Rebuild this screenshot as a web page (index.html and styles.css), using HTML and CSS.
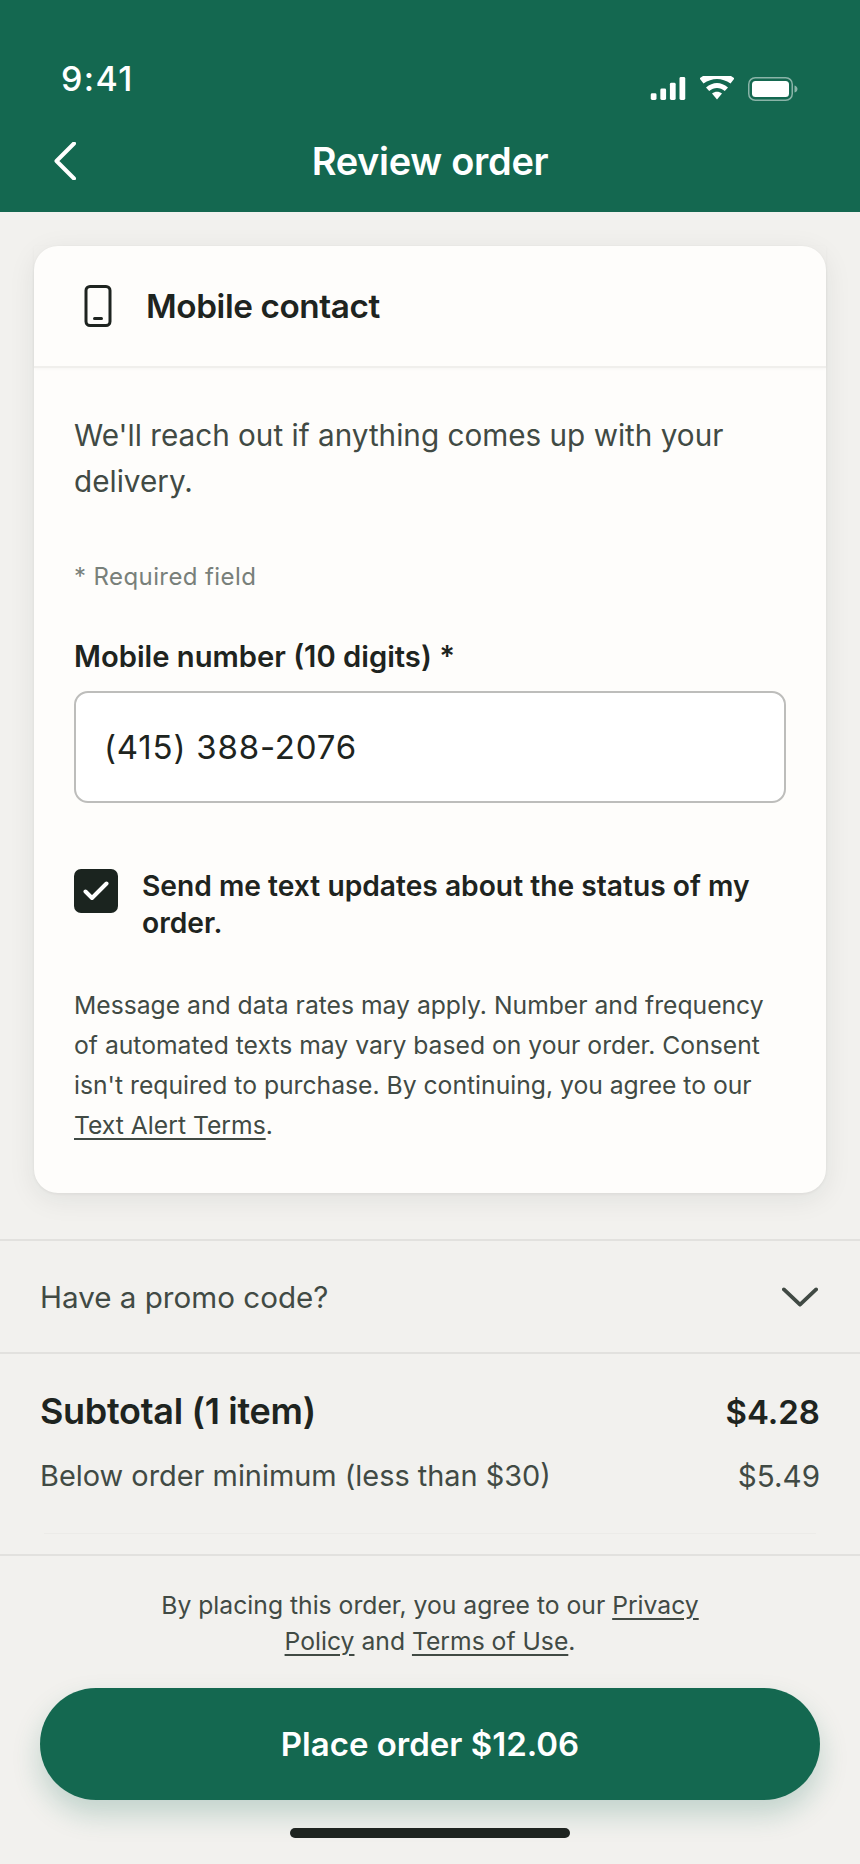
FILE: index.html
```html
<!DOCTYPE html>
<html lang="en">
<head>
<meta charset="utf-8">
<title>Review order</title>
<link rel="stylesheet" href="styles.css">
</head>
<body>
<div class="screen">
  <header class="header">
    <div class="status">
      <span class="time">9:41</span>
      <div class="status-icons">
        <svg class="signal" width="36" height="23" viewBox="0 0 36 24"><rect x="0" y="17" width="6" height="7" rx="1.5"/><rect x="10" y="12" width="6" height="12" rx="1.5"/><rect x="20" y="6" width="6" height="18" rx="1.5"/><rect x="30" y="0" width="6" height="24" rx="1.5"/></svg>
        <svg class="wifi" width="34" height="24" viewBox="0 0 34 24"><path d="M0 2 L3 0 H31 L34 2 V3 L30.500 7.500 C22 1.500 12 1.500 3.500 7.500 L0 3 Z"/><path d="M6 11.500 C13 5.500 21 5.500 28 11.500 L24.800 15 C20 11 14 11 9.200 15 Z"/><path d="M12 17.500 C15 15 19 15 22 17.500 L17 23.500 Z"/></svg>
        <svg class="battery" width="50" height="24" viewBox="0 0 50 24"><rect x="0.750" y="0.750" width="43.500" height="22.500" rx="6.500" class="batt-rim"/><rect x="4" y="4" width="37" height="16" rx="3.500" class="batt-fill"/><path d="M46.500 8.500 C48.500 9 49.500 10.500 49.500 12 C49.500 13.500 48.500 15 46.500 15.500 Z" class="batt-cap"/></svg>
      </div>
    </div>
    <div class="nav">
      <svg class="back" width="22" height="38" viewBox="0 0 22 38"><path d="M20 1.500 L2.500 19 L20 36.500"/></svg>
      <h1 class="title">Review order</h1>
    </div>
  </header>

  <main class="content">
    <section class="card">
      <div class="card-head">
        <svg class="phone" width="28" height="42" viewBox="0 0 28 42"><rect x="2" y="1.500" width="24" height="39" rx="4"/><path d="M10.500 33.500 H17.500"/></svg>
        <h2 class="card-title">Mobile contact</h2>
      </div>
      <div class="card-body">
        <p class="lead">We'll reach out if anything comes up with your delivery.</p>
        <p class="required">* Required field</p>
        <label class="field-label">Mobile number (10 digits) *</label>
        <div class="input">(415) 388-2076</div>
        <div class="consent">
          <span class="checkbox"><svg width="26" height="20" viewBox="0 0 26 20"><path d="M2.500 10.500 L9 17 L23.500 2.500"/></svg></span>
          <p class="consent-text">Send me text updates about the status of my order.</p>
        </div>
        <p class="fine">Message and data rates may apply. Number and frequency of automated texts may vary based on your order. Consent isn't required to purchase. By continuing, you agree to our <a class="link">Text Alert Terms</a>.</p>
      </div>
    </section>

    <div class="promo">
      <span>Have a promo code?</span>
      <svg class="chevron" width="38" height="20" viewBox="0 0 38 20"><path d="M2 2 L19 18 L36 2"/></svg>
    </div>

    <div class="totals">
      <div class="row row-strong"><span>Subtotal (1 item)</span><span class="amount">$4.28</span></div>
      <div class="row row-plain"><span>Below order minimum (less than $30)</span><span class="amount-plain">$5.49</span></div>
      <div class="totals-rule"></div>
    </div>

    <div class="checkout">
      <p class="agree">By placing this order, you agree to our <a class="link">Privacy</a> <a class="link">Policy</a> and <a class="link">Terms of Use</a>.</p>
      <button class="place">Place order $12.06</button>
      <div class="home-bar"></div>
    </div>
  </main>
</div>
</body>
</html>
```
FILE: styles.css
```css
* { box-sizing: border-box; }
html, body { margin: 0; padding: 0; }
body { font-family: Inter, "Liberation Sans", sans-serif; background: #f2f1ee; color: #1e2420; }
.screen { width: 860px; height: 1864px; overflow: hidden; display: flex; flex-direction: column; }

.header { height: 212px; background: #146850; color: #fff; display: flex; flex-direction: column; }
.status { height: 130px; padding: 58px 62px 0 61px; display: flex; justify-content: space-between; }
.time { font-size: 34px; line-height: 42px; font-weight: 500; letter-spacing: 1.4px; }
.status-icons { display: flex; align-items: flex-start; gap: 14px; padding-top: 19px; }
.status-icons svg { fill: #fff; display: block; }
.wifi { margin-top: -1px; }
.batt-rim { fill: none; stroke: #fff; stroke-width: 1.500; opacity: .5; }
.batt-cap { opacity: .5; }

.nav { flex: 1; position: relative; display: flex; justify-content: center; align-items: flex-start; }
.back { position: absolute; left: 54px; top: 12px; fill: none; stroke: #fff; stroke-width: 4; stroke-linecap: round; stroke-linejoin: round; }
.title { margin: 8px 0 0; font-size: 38px; line-height: 46px; font-weight: 600; letter-spacing: -0.3px; }

.content { flex: 1; display: flex; flex-direction: column; }
.card { margin: 34px 34px 0; height: 947px; background: #fefdfb; border-radius: 24px; box-shadow: 0 6px 28px rgba(30, 36, 32, .08), 0 1px 3px rgba(30, 36, 32, .06); }
.card-head { height: 122px; display: flex; align-items: center; padding: 0 50px; gap: 34px; border-bottom: 2px solid #f0efec; box-shadow: 0 1px 3px rgba(30, 36, 32, .03); }
.phone { fill: none; stroke: #1e2420; stroke-width: 3; stroke-linecap: round; }
.card-title { margin: 0; font-size: 33.300px; font-weight: 600; letter-spacing: -0.4px; }
.card-body { padding: 44px 40px 0; }
.lead { margin: 0; font-size: 29.7px; line-height: 46px; color: #414a44; }
.required { margin: 57px 0 0; font-size: 24px; line-height: 32px; color: #78807a; letter-spacing: .4px; }
.field-label { display: block; margin-top: 46px; font-size: 29.200px; line-height: 36px; font-weight: 600; }
.input { margin-top: 16px; height: 112px; border: 2px solid #bdbdbb; border-radius: 14px; background: #fff; padding: 0 28px; display: flex; align-items: center; font-size: 33px; letter-spacing: .8px; color: #1e2420; }
.consent { margin-top: 66px; display: flex; gap: 24px; align-items: flex-start; }
.checkbox { flex: none; width: 44px; height: 44px; border-radius: 7px; background: #1b241f; display: flex; align-items: center; justify-content: center; }
.checkbox svg { fill: none; stroke: #fff; stroke-width: 4; stroke-linecap: round; stroke-linejoin: round; }
.consent-text { margin: -1px 0 0; font-size: 28.2px; line-height: 37px; font-weight: 600; }
.fine { margin: 43px 0 0; font-size: 24.7px; line-height: 40px; color: #414a44; }
.link { color: inherit; text-decoration: underline; text-underline-offset: 4px; }

.promo { margin-top: 46px; height: 115px; border-top: 2px solid #e2e1de; border-bottom: 2px solid #e2e1de; padding: 0 40px; display: flex; justify-content: space-between; align-items: center; font-size: 29.6px; color: #414a44; }
.chevron { width: 36px; fill: none; stroke: #414a44; stroke-width: 4; stroke-linecap: round; stroke-linejoin: round; margin-right: 2px; }

.totals { padding: 0 40px; height: 202px; border-bottom: 2px solid #e2e1de; }
.row { display: flex; justify-content: space-between; }
.row-strong { padding-top: 35px; font-size: 36px; line-height: 44px; font-weight: 600; letter-spacing: -0.3px; align-items: baseline; }
.amount { font-size: 33px; letter-spacing: 0; }
.row-plain { margin-top: 22px; font-size: 28.9px; line-height: 40px; color: #414a44; }
.amount-plain { font-size: 29.6px; }
.totals-rule { margin: 37px 4px 0; height: 1px; background: #ecebe8; }

.checkout { flex: 1; display: flex; flex-direction: column; align-items: center; }
.agree { width: 600px; margin: 31px 0 0; text-align: center; font-size: 24.7px; line-height: 36px; color: #414a44; }
.place { margin-top: 29px; width: 780px; height: 112px; border: 0; border-radius: 56px; background: #146850; color: #fff; font-family: inherit; font-size: 33px; font-weight: 600; box-shadow: 0 14px 28px rgba(20, 104, 80, .22); }
.home-bar { margin-top: 28px; width: 280px; height: 10px; border-radius: 5px; background: #1e2420; }
```
